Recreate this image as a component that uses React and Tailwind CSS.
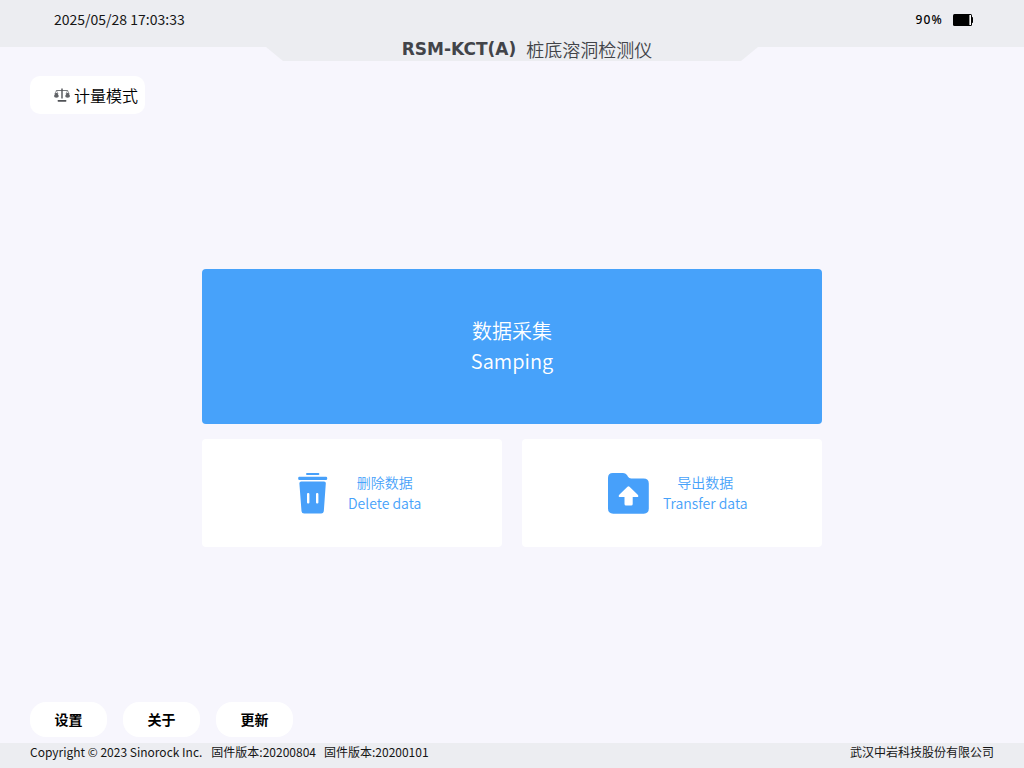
const dataCards = [
  { zh: '删除数据', en: 'Delete data', Icon: TrashIcon, layout: 'pl-24 gap-5' },
  { zh: '导出数据', en: 'Transfer data', Icon: ExportIcon, layout: 'pl-[85px] gap-[14px]' },
];

const navItems = ['设置', '关于', '更新'];

function BatteryIcon() {
  return (
    <svg width="20" height="12" viewBox="0 0 20 12" aria-hidden="true">
      <rect x="0" y="0" width="19" height="12" rx="1.5" fill="#000" />
      <rect x="18" y="3" width="2" height="6" rx="0.8" fill="#000" />
      <rect x="16.4" y="1" width="1.6" height="10" fill="#fff" />
    </svg>
  );
}

function ScaleIcon() {
  return (
    <svg width="16" height="15" viewBox="0 0 16 15" fill="none" aria-hidden="true">
      <path d="M2.2 2.5H13.8" stroke="#77797c" strokeWidth="1" />
      <path d="M8 0.5V10.5" stroke="#505256" strokeWidth="1.4" />
      <path d="M2.4 2.5L0.8 6M2.4 2.5L4 6M13.6 2.5L12 6M13.6 2.5L15.2 6" stroke="#85878a" strokeWidth="0.8" />
      <path
        d="M1.4 5H3.4L4.8 8Q4.8 9.8 2.4 9.8T0 8ZM12.6 5H14.6L16 8Q16 9.8 13.6 9.8T11.2 8Z"
        fill="#606266"
      />
      <rect x="3.6" y="12" width="8.8" height="1.7" rx="0.6" fill="#505256" />
    </svg>
  );
}

function TrashIcon() {
  return (
    <svg width="30" height="42" viewBox="0 0 30 42" aria-hidden="true">
      <rect x="8" y="0.9" width="13.4" height="2.2" rx="1" fill="#47a0fa" />
      <rect x="0.2" y="4.8" width="29" height="3.2" rx="1.2" fill="#47a0fa" />
      <path
        d="M3.2 9.4H26Q28 9.4 27.8 11.4L25.8 39.3Q25.5 41.6 23.2 41.6H6.2Q3.8 41.6 3.5 39.3L1.4 11.4Q1.3 9.4 3.2 9.4Z"
        fill="#47a0fa"
      />
      <rect x="9" y="21" width="2.4" height="10.4" rx="1" fill="#fff" />
      <rect x="18" y="21" width="2.4" height="10.4" rx="1" fill="#fff" />
    </svg>
  );
}

function ExportIcon() {
  return (
    <svg width="42" height="42" viewBox="0 0 42 42" aria-hidden="true">
      <path
        d="M5.8 1H16Q18.4 1 20 3L21 4.8Q22 6.4 24.2 6.4H36.6Q41.8 6.4 41.8 11.4V36.6Q41.8 41.7 36.8 41.7H6.2Q1 41.7 1 36.6V6Q1 1 5.8 1Z"
        fill="#47a0fa"
      />
      <path
        d="M20.5 14.7Q21.5 13.7 22.5 14.7L31 22.9Q32 24.9 30 25H25.7V32Q25.7 33.6 24.2 33.6H19Q17.5 33.6 17.5 32V25H13Q11 24.9 12 22.9Z"
        fill="#fff"
      />
    </svg>
  );
}

function Header() {
  return (
    <header>
      <div className="flex h-[47px] items-start justify-between bg-[#ecedf1] pt-[9px] pr-[51px] pl-[54px] leading-5">
        <time className="text-sm font-normal">2025/05/28 17:03:33</time>
        <div className="flex items-center gap-[10px] pt-px">
          <span className="font-['Noto_Sans','Noto_Sans_CJK_SC',sans-serif] text-xs leading-5 font-medium tracking-widest text-black">
            90%
          </span>
          <BatteryIcon />
        </div>
      </div>
      <h1 className="mx-auto -mt-[11px] flex h-[25px] w-[492px] items-center justify-center gap-[10px] bg-[#ecedf1] pl-[30px] text-[#424449] [clip-path:polygon(0_0,100%_0,100%_11px,calc(100%-17px)_100%,17px_100%,0_11px)]">
        <span className="font-['DejaVu_Sans',sans-serif] text-[17px] leading-[26px] font-bold">RSM-KCT(A)</span>
        <span className="text-lg leading-[22px]">桩底溶洞检测仪</span>
      </h1>
    </header>
  );
}

function Footer() {
  return (
    <footer>
      <nav className="flex gap-4 px-[30px]">
        {navItems.map((item) => (
          <button
            key={item}
            type="button"
            className="h-[35px] w-[77px] rounded-2xl bg-white pb-[2px] text-sm font-bold text-black"
          >
            {item}
          </button>
        ))}
      </nav>
      <div className="mt-[6px] flex h-[25px] justify-between bg-[#ecedf1] px-[30px] text-xs leading-[18px] font-normal">
        <p className="flex">
          <span className="mr-[9px]">Copyright © 2023 Sinorock Inc.</span>
          <span className="mr-2">固件版本:20200804</span>
          <span>固件版本:20200101</span>
        </p>
        <p>武汉中岩科技股份有限公司</p>
      </div>
    </footer>
  );
}

const App = () => {
  return (
    <div className="flex min-h-screen flex-col bg-[#f7f6fd] font-['Noto_Sans_CJK_SC',sans-serif] font-[350] text-[#151515]">
      <Header />

      <div className="mt-[15px] px-[30px]">
        <button
          type="button"
          className="flex h-[38px] items-center gap-1 rounded-[10px] bg-white pr-[7px] pl-6 text-base leading-5 text-black"
        >
          <ScaleIcon />
          计量模式
        </button>
      </div>

      <main className="mx-auto flex w-full max-w-[620px] flex-1 flex-col justify-center">
        <button
          type="button"
          className="flex h-[155px] flex-col items-center justify-center rounded bg-[#47a2fa] pb-[2px] text-xl leading-[30px] text-white"
        >
          <span>数据采集</span>
          <span>Samping</span>
        </button>
        <div className="mt-[15px] grid grid-cols-2 gap-5">
          {dataCards.map(({ zh, en, Icon, layout }) => (
            <button
              key={en}
              type="button"
              className={`flex h-[108px] items-center rounded bg-white text-sm leading-[21px] text-[#47a2fa] ${layout}`}
            >
              <Icon />
              <span className="flex flex-col items-center">
                <span>{zh}</span>
                <span>{en}</span>
              </span>
            </button>
          ))}
        </div>
      </main>

      <Footer />
    </div>
  );
};

export default App;
